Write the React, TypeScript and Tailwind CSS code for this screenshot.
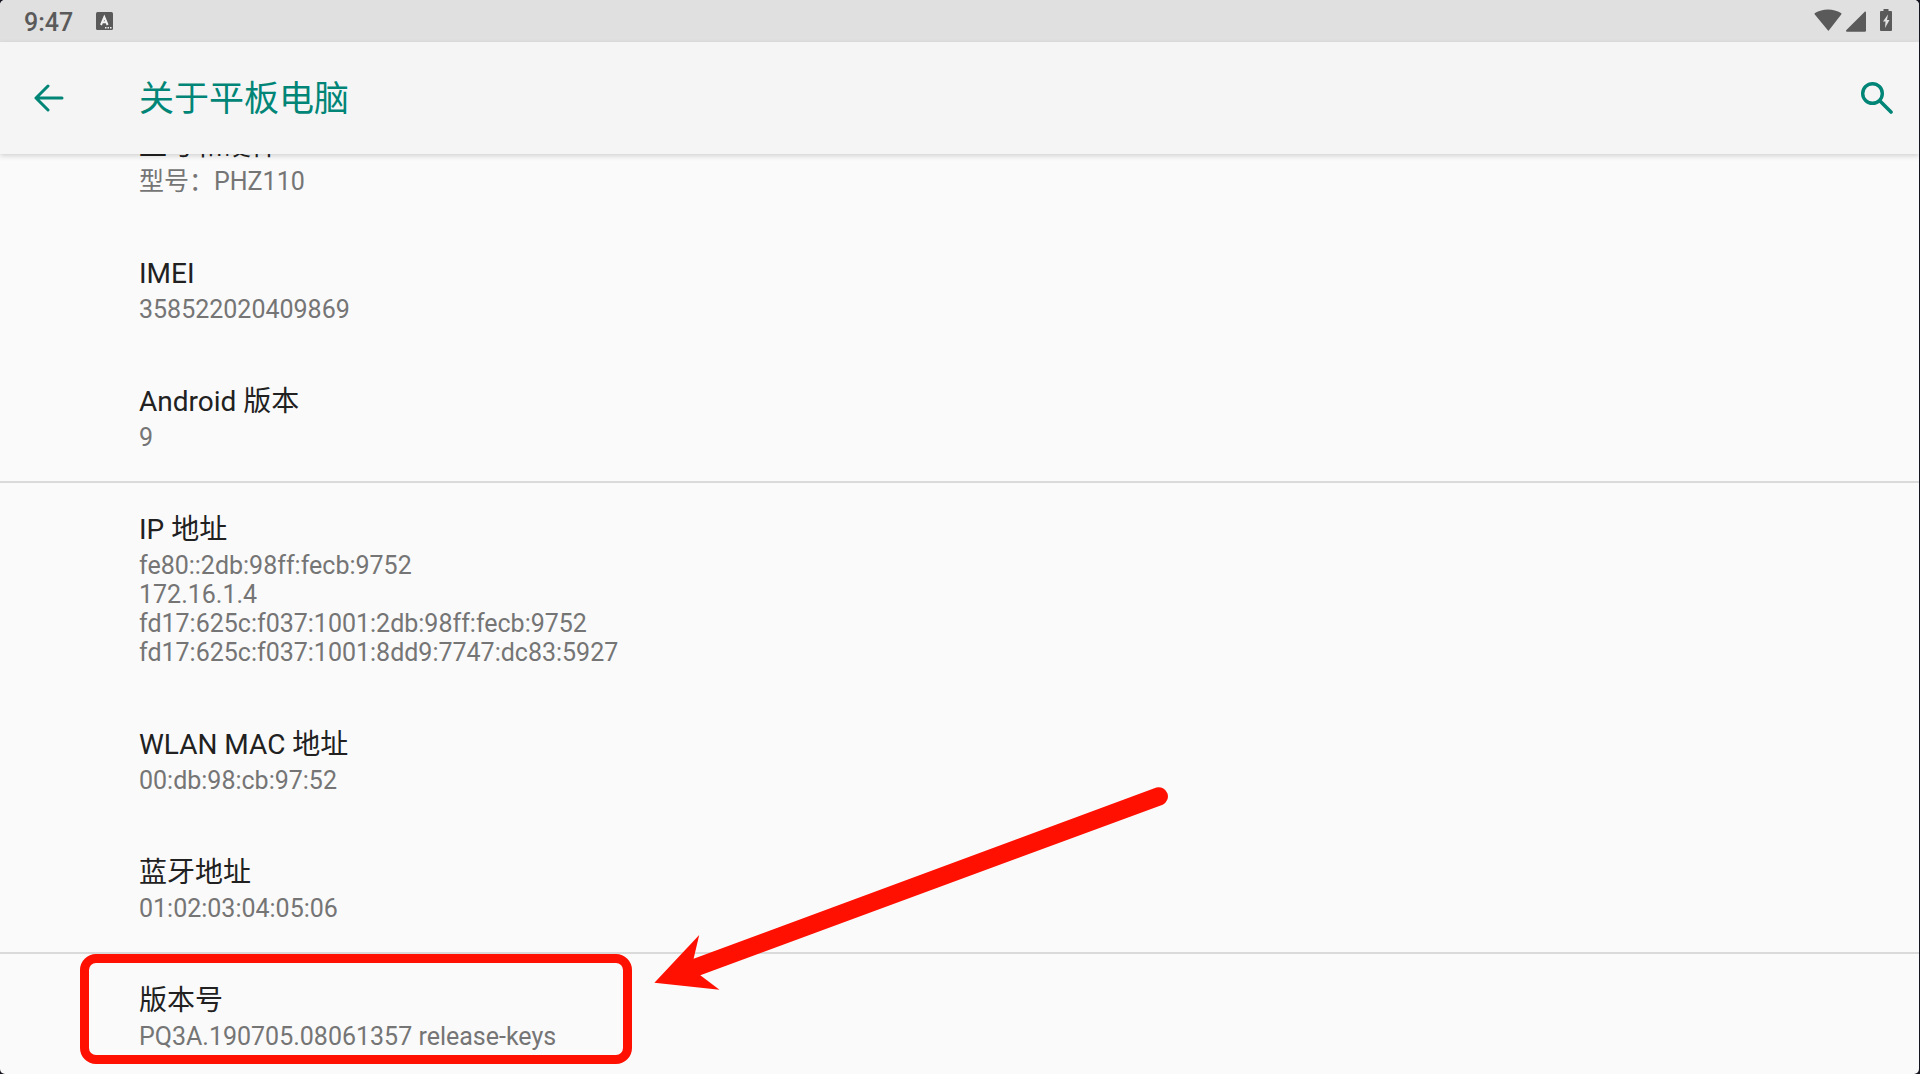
import { ReactNode } from "react";

interface InfoItem {
  title: string;
  lines: string[];
}

const hardwareItems: InfoItem[] = [
  { title: "型号和硬件", lines: ["型号：PHZ110"] },
  { title: "IMEI", lines: ["358522020409869"] },
  { title: "Android 版本", lines: ["9"] },
];

const networkItems: InfoItem[] = [
  {
    title: "IP 地址",
    lines: [
      "fe80::2db:98ff:fecb:9752",
      "172.16.1.4",
      "fd17:625c:f037:1001:2db:98ff:fecb:9752",
      "fd17:625c:f037:1001:8dd9:7747:dc83:5927",
    ],
  },
  { title: "WLAN MAC 地址", lines: ["00:db:98:cb:97:52"] },
  { title: "蓝牙地址", lines: ["01:02:03:04:05:06"] },
];

const buildItem: InfoItem = {
  title: "版本号",
  lines: ["PQ3A.190705.08061357 release-keys"],
};

function InfoRow({ item, children }: { item: InfoItem; children?: ReactNode }) {
  return (
    <div className="relative pt-[25px] pr-8 pb-[31px] pl-[139px]">
      <h2 className="text-[28px] leading-[43px] text-[#212121]">
        {item.title}
      </h2>
      {item.lines.map((line) => (
        <p key={line} className="text-[25px] leading-[29px] text-[#757575]">
          {line}
        </p>
      ))}
      {children}
    </div>
  );
}

function StatusBar() {
  return (
    <div className="flex h-[42px] shrink-0 items-center justify-between bg-[#e0e0e0] pr-[27px] pl-6 text-[#5a5a5a]">
      <div className="flex items-center gap-[23px]">
        <span className="pt-1 text-[25px] leading-8 font-medium">9:47</span>
        <svg className="h-[18px] w-[17px]" viewBox="0 0 17 18">
          <rect width="17" height="18" rx="1.5" fill="currentColor" />
          <path
            d="M5 13L8.300 5L11.600 13M6.200 10.300H10.400"
            fill="none"
            stroke="#f2f2f2"
            strokeWidth="2"
          />
          <path
            d="M9 15h1.500v1.500H9zM11.500 15H13v1.500h-1.500zM14 15h1.500v1.500H14z"
            fill="#f2f2f2"
          />
        </svg>
      </div>
      <div className="flex items-center pb-[3px]">
        <svg className="h-6 w-7" viewBox="0 0 28 24" fill="currentColor">
          <path d="M14 22.500L0.800 6.500C0.400 6 0.500 5.400 1 5C8.500 0.300 19.500 0.300 27 5C27.500 5.400 27.600 6 27.200 6.500L14.800 22.500C14.500 22.800 14.300 22.800 14 22.500Z" />
        </svg>
        <svg className="ml-1 h-6 w-5" viewBox="0 -1 20 24" fill="currentColor">
          <path d="M20 3.500V21.500C20 22.300 19.600 22.700 18.900 22.700H1C0 22.700-.3 21.800.4 21.100L18.500 2.900C19.200 2.300 20 2.600 20 3.500Z" />
        </svg>
        <svg className="ml-3.5 h-6 w-3" viewBox="0 0 12 24" fill="currentColor">
          <path
            fillRule="evenodd"
            d="M3.500 1h5v2H11a1 1 0 0 1 1 1v18a1 1 0 0 1-1 1H1a1 1 0 0 1-1-1V4a1 1 0 0 1 1-1h2.500zM8 6.500L3 13.500H5.500L5 20L9.500 12H7z"
          />
        </svg>
      </div>
    </div>
  );
}

function AppBar() {
  return (
    <header className="z-10 flex h-28 shrink-0 items-center bg-[#f5f5f5] pr-[26px] pl-[34px] text-[#008577] shadow-[0_2px_5px_rgba(0,0,0,0.16)]">
      <button type="button" aria-label="返回" className="cursor-pointer">
        <svg
          className="h-7 w-[30px]"
          viewBox="0 0 30 28"
          fill="none"
          stroke="currentColor"
          strokeWidth="3"
          strokeLinecap="round"
          strokeLinejoin="round"
        >
          <path d="M14 2L2 14L14 26M2 14H28" />
        </svg>
      </button>
      <h1 className="ml-[75px] pt-[3px] text-[35px] leading-10">
        关于平板电脑
      </h1>
      <button type="button" aria-label="搜索" className="ml-auto cursor-pointer">
        <svg
          className="h-8 w-8"
          viewBox="0 0 32 32"
          fill="none"
          stroke="currentColor"
        >
          <circle cx="11.500" cy="11.500" r="9.800" strokeWidth="3.400" />
          <path d="M19.500 19.500L30 30" strokeWidth="3.600" strokeLinecap="round" />
        </svg>
      </button>
    </header>
  );
}

// Red frame and arrow pointing at the build number
function BuildCallout() {
  return (
    <>
      <div className="absolute top-0 left-20 h-[110px] w-[552px] rounded-2xl border-9 border-[#ff1000]" />
      <svg
        className="absolute top-[-168px] left-[654px] h-[204px] w-[515px]"
        viewBox="0 0 515 204"
        fill="#ff1000"
      >
        <path d="M0.400 196.700L45.200 149L39.600 172.700L502.400 1.500A9.200 9.200 0 0 1 508.700 18.700L46.300 189.300L65.500 203.700Z" />
      </svg>
    </>
  );
}

export default function App() {
  return (
    <div className="h-screen bg-[#15151f] pr-px font-[Roboto,'Noto_Sans_CJK_SC',sans-serif]">
      <div className="flex h-full flex-col overflow-hidden rounded-[5px] bg-[#fafafa]">
        <StatusBar />
        <AppBar />
        <main className="min-h-0 flex-1 overflow-hidden">
          {/* list is scrolled partway under the app bar */}
          <section className="-mt-[55px]">
            {hardwareItems.map((item) => (
              <InfoRow key={item.title} item={item} />
            ))}
          </section>
          <section className="-mt-0.5 border-t-2 border-[#dadada]">
            {networkItems.map((item) => (
              <InfoRow key={item.title} item={item} />
            ))}
          </section>
          <section className="-mt-0.5 border-t-2 border-[#dadada]">
            <InfoRow item={buildItem}>
              <BuildCallout />
            </InfoRow>
          </section>
        </main>
      </div>
    </div>
  );
}
